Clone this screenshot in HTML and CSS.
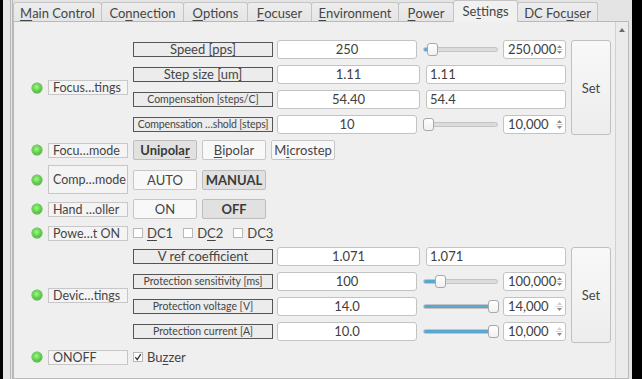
FILE: index.html
```html
<!DOCTYPE html>
<html>
<head>
<meta charset="utf-8">
<link rel="stylesheet" href="styles.css">
</head>
<body>
<div class="window">
  <div class="inner">
    <div class="tabbar">
      <div class="tab w-main"><u>M</u>ain Control</div>
      <div class="tab w-conn">Co<u>n</u>nection</div>
      <div class="tab w-opt"><u>O</u>ptions</div>
      <div class="tab w-foc"><u>F</u>ocuser</div>
      <div class="tab w-env"><u>E</u>nvironment</div>
      <div class="tab w-pow"><u>P</u>ower</div>
      <div class="tab w-set active">Se<u>t</u>tings</div>
      <div class="tab w-dc">DC Foc<u>u</u>ser</div>
    </div>
    <div class="panel">
      <div class="content">

        <div class="row group g1">
          <div class="side"><span class="led"></span><span class="name">Focus…tings</span></div>
          <div class="fields">
            <div class="frow">
              <span class="flabel">Speed [pps]</span>
              <span class="input val">250</span>
              <span class="slider"><span class="groove"><span class="fill" style="width:6px"></span></span><span class="handle" style="left:4px"></span></span>
              <span class="spin">250,000<span class="arrows"><svg width="9" height="17" viewBox="0 0 9 17"><path d="M2 7 L4.5 4 L7 7 Z" fill="#8a8a8a"/><path d="M1 8.5 H8" stroke="#d4d4d4" stroke-width="1"/><path d="M2 10 L4.5 13 L7 10 Z" fill="#8a8a8a"/></svg></span></span>
            </div>
            <div class="frow">
              <span class="flabel">Step size [um]</span>
              <span class="input val wide">1.11</span>
              <span class="input second">1.11</span>
            </div>
            <div class="frow">
              <span class="flabel small">Compensation [steps/C]</span>
              <span class="input val wide">54.40</span>
              <span class="input second">54.4</span>
            </div>
            <div class="frow">
              <span class="flabel small tight">Compensation …shold [steps]</span>
              <span class="input val">10</span>
              <span class="slider"><span class="groove"></span><span class="handle" style="left:0px"></span></span>
              <span class="spin">10,000<span class="arrows"><svg width="9" height="17" viewBox="0 0 9 17"><path d="M2 7 L4.5 4 L7 7 Z" fill="#8a8a8a"/><path d="M1 8.5 H8" stroke="#d4d4d4" stroke-width="1"/><path d="M2 10 L4.5 13 L7 10 Z" fill="#8a8a8a"/></svg></span></span>
            </div>
          </div>
          <div class="setbtn">Set</div>
        </div>

        <div class="row r-mode">
          <div class="side"><span class="led"></span><span class="name">Focu…mode</span></div>
          <div class="buttons">
            <span class="btn pressed">Unipola<u>r</u></span>
            <span class="btn"><u>B</u>ipolar</span>
            <span class="btn">M<u>i</u>crostep</span>
          </div>
        </div>

        <div class="row r-comp">
          <div class="side"><span class="led"></span><span class="name tall">Comp…mode</span></div>
          <div class="buttons">
            <span class="btn">AUTO</span>
            <span class="btn pressed">MANUAL</span>
          </div>
        </div>

        <div class="row r-hand">
          <div class="side"><span class="led"></span><span class="name">Hand …oller</span></div>
          <div class="buttons">
            <span class="btn">ON</span>
            <span class="btn pressed">OFF</span>
          </div>
        </div>

        <div class="row r-power">
          <div class="side"><span class="led"></span><span class="name">Powe…t ON</span></div>
          <div class="checks">
            <span class="check"><span class="box"></span><u>D</u>C1</span>
            <span class="check"><span class="box"></span>D<u>C</u>2</span>
            <span class="check"><span class="box"></span>DC<u>3</u></span>
          </div>
        </div>

        <div class="row group g2">
          <div class="side"><span class="led"></span><span class="name">Devic…tings</span></div>
          <div class="fields">
            <div class="frow">
              <span class="flabel">V ref coefficient</span>
              <span class="input val wide">1.071</span>
              <span class="input second">1.071</span>
            </div>
            <div class="frow">
              <span class="flabel small">Protection sensitivity [ms]</span>
              <span class="input val">100</span>
              <span class="slider"><span class="groove"><span class="fill" style="width:16px"></span></span><span class="handle" style="left:12px"></span></span>
              <span class="spin">100,000<span class="arrows"><svg width="9" height="17" viewBox="0 0 9 17"><path d="M2 7 L4.5 4 L7 7 Z" fill="#8a8a8a"/><path d="M1 8.5 H8" stroke="#d4d4d4" stroke-width="1"/><path d="M2 10 L4.5 13 L7 10 Z" fill="#8a8a8a"/></svg></span></span>
            </div>
            <div class="frow">
              <span class="flabel small">Protection voltage [V]</span>
              <span class="input val">14.0</span>
              <span class="slider"><span class="groove"><span class="fill" style="width:70px"></span></span><span class="handle" style="left:65px"></span></span>
              <span class="spin">14,000<span class="arrows"><svg width="9" height="17" viewBox="0 0 9 17"><path d="M2 7 L4.5 4 L7 7 Z" fill="#cfcfcf"/><path d="M1 8.5 H8" stroke="#d4d4d4" stroke-width="1"/><path d="M2 10 L4.5 13 L7 10 Z" fill="#8a8a8a"/></svg></span></span>
            </div>
            <div class="frow">
              <span class="flabel small">Protection current [A]</span>
              <span class="input val">10.0</span>
              <span class="slider"><span class="groove"><span class="fill" style="width:70px"></span></span><span class="handle" style="left:65px"></span></span>
              <span class="spin">10,000<span class="arrows"><svg width="9" height="17" viewBox="0 0 9 17"><path d="M2 7 L4.5 4 L7 7 Z" fill="#cfcfcf"/><path d="M1 8.5 H8" stroke="#d4d4d4" stroke-width="1"/><path d="M2 10 L4.5 13 L7 10 Z" fill="#8a8a8a"/></svg></span></span>
            </div>
          </div>
          <div class="setbtn">Set</div>
        </div>

        <div class="row r-onoff">
          <div class="side"><span class="led"></span><span class="name">ONOFF</span></div>
          <div class="checks">
            <span class="check"><span class="box checked"><svg width="10" height="10" viewBox="0 0 10 10"><path d="M2.3 5.2 L4.2 7.6 L7.8 2.2" fill="none" stroke="#333" stroke-width="1.3"/></svg></span>Bu<u>z</u>zer</span>
          </div>
        </div>

      </div>
      <div class="scrollbar"><span class="uparrow"></span></div>
    </div>
  </div>
</div>
</body>
</html>
```

FILE: styles.css
```css
* { box-sizing: border-box; }
html, body { margin: 0; padding: 0; }
body {
  background: #000;
  font-family: Lato, "Open Sans", sans-serif;
  font-size: 13px;
  color: #454545;
  width: 642px;
  height: 379px;
  overflow: hidden;
}
u { text-decoration: underline; text-underline-offset: 2px; text-decoration-thickness: 1px; }

.window {
  margin-left: 3px;
  width: 629px;
  height: 379px;
  background: #e4e4e4;
  padding-left: 7px;
  overflow: hidden;
}
.inner {
  height: 100%;
  border-left: 3px double #b7b7b7;
  display: flex;
  flex-direction: column;
}

/* tabs */
.tabbar {
  height: 21px;
  display: flex;
  align-items: flex-end;
  position: relative;
  z-index: 2;
}
.tab {
  height: 19px;
  border: 1px solid #c4c4c4;
  border-bottom: none;
  border-radius: 3px 3px 0 0;
  background: linear-gradient(#ededed, #e5e5e5);
  display: flex;
  align-items: center;
  justify-content: center;
  color: #454545;
  margin-left: -1px;
  padding-top: 1px;
}
.tab:first-child { margin-left: 0; }
.tab.active {
  height: 22px;
  margin-bottom: -1px;
  background: #f1f1f1;
  z-index: 3;
  padding-bottom: 2px;
}
.w-main { width: 89px; }
.w-conn { width: 83px; }
.w-opt { width: 65px; }
.w-foc { width: 65px; }
.w-env { width: 88px; }
.w-pow { width: 56px; }
.w-set { width: 65px; }
.w-dc { width: 81px; }

/* panel */
.panel {
  width: 616px;
  flex: 1;
  border: 1px solid #b9b9b9;
  background: #efefef;
  display: flex;
}
.content {
  flex: 1;
  padding-top: 18px;
  display: flex;
  flex-direction: column;
  gap: 5px;
}
.scrollbar {
  width: 13px;
  border-left: 1px solid #d2d2d2;
  background: #ebebeb;
  position: relative;
}
.uparrow {
  position: absolute;
  left: 3px;
  top: 6px;
  width: 0; height: 0;
  border-left: 3px solid transparent;
  border-right: 3px solid transparent;
  border-bottom: 4px solid #6a6a6a;
}

/* rows */
.row { display: flex; align-items: center; }
.side {
  width: 114px;
  margin-right: 5px;
  padding-left: 18px;
  display: flex;
  align-items: center;
}
.led {
  width: 10px;
  height: 10px;
  border-radius: 50%;
  margin-right: 6px;
  flex: none;
  background: radial-gradient(circle at 45% 40%, #a6f58f 0%, #62d64a 45%, #3a9d2c 100%);
  box-shadow: 0 0 0 0.5px #4d9a3e;
}
.name {
  width: 80px;
  height: 15px;
  border: 1px solid #c7c7c7;
  background: #f4f4f4;
  padding-left: 4px;
  font-size: 12.5px;
  line-height: 13px;
  white-space: nowrap;
  overflow: hidden;
}
.name.tall { height: 29px; line-height: 27px; }

.g1 { height: 95px; }
.g2 { height: 96px; }
.r-mode { height: 20px; }
.r-comp { height: 29px; }
.r-hand { height: 20px; }
.r-power { height: 18px; }
.r-onoff { height: 18px; }

.fields {
  display: flex;
  flex-direction: column;
  gap: 6px;
  align-self: flex-start;
}
.frow {
  height: 19px;
  display: flex;
  align-items: center;
}
.flabel {
  width: 140px;
  height: 15px;
  border: 1px solid #555;
  background: #ececec;
  text-align: center;
  line-height: 13px;
  margin-right: 4px;
  white-space: nowrap;
  overflow: hidden;
}
.flabel.small { font-size: 10.5px; }
.flabel.tight { letter-spacing: -0.15px; }
.input {
  height: 19px;
  border: 1px solid #c3c3c3;
  border-radius: 3px;
  background: #fff;
  line-height: 17px;
  color: #404040;
}
.input.val { width: 140px; text-align: center; margin-right: 6px; }
.input.val.wide { width: 143px; }
.input.second { width: 140px; padding-left: 3px; }

.slider {
  position: relative;
  width: 75px;
  height: 19px;
  margin-right: 5px;
}
.groove {
  position: absolute;
  left: 0; right: 0;
  top: 7px;
  height: 5px;
  border: 1px solid #c4c4c4;
  border-radius: 3px;
  background: #dcdcdc;
  overflow: hidden;
}
.fill {
  position: absolute;
  left: 0; top: 0; bottom: 0;
  background: #5ca6d2;
}
.handle {
  position: absolute;
  top: 3px;
  width: 11px;
  height: 13px;
  border: 1px solid #a8a8a8;
  border-radius: 3px;
  background: linear-gradient(#ffffff, #f1f1f1);
}
.spin {
  position: relative;
  width: 63px;
  height: 19px;
  border: 1px solid #c3c3c3;
  border-radius: 3px;
  background: #fff;
  padding-left: 4px;
  line-height: 17px;
  color: #404040;
}
.arrows {
  position: absolute;
  right: 1px;
  top: 0px;
  width: 9px;
  height: 17px;
  display: flex;
}

.setbtn {
  width: 40px;
  align-self: stretch;
  margin-left: 5px;
  border: 1px solid #c0c0c0;
  border-radius: 3px;
  background: linear-gradient(#f8f8f8, #ededed);
  display: flex;
  align-items: center;
  justify-content: center;
}

.buttons { display: flex; gap: 5px; }
.btn {
  width: 64px;
  height: 20px;
  border: 1px solid #c6c6c6;
  border-radius: 2px;
  background: #f8f8f8;
  display: flex;
  align-items: center;
  justify-content: center;
  color: #454545;
}
.btn.pressed {
  background: #e1e1e1;
  border-color: #bdbdbd;
  font-weight: bold;
  color: #3a3a3a;
}

.checks { display: flex; gap: 10px; }
.check { display: flex; align-items: center; }
.box {
  width: 10px;
  height: 10px;
  border: 1px solid #b8b8b8;
  background: #fff;
  margin-right: 4px;
  position: relative;
  display: inline-block;
}
.box svg { position: absolute; left: -1px; top: -1px; }
```
